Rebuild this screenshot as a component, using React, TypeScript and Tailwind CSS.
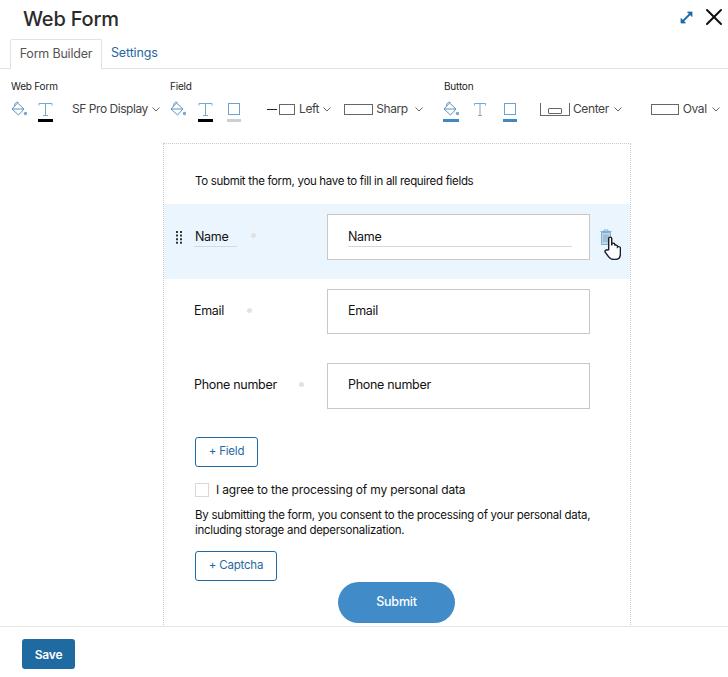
import React from 'react';
import { X } from 'lucide-react';

const Chevron = ({ className = '' }: { className?: string }) => (
    <svg width="8" height="5" viewBox="0 0 8 5" fill="none" className={`shrink-0 ${className}`}>
        <path d="M0.5 0.5L4 4L7.5 0.5" stroke="#555" strokeWidth="0.9" />
    </svg>
);

const Bucket = () => (
    <svg width="16" height="16" viewBox="0 0 16 16" fill="none" stroke="#5b93c2" strokeWidth="1" className="block">
        <path d="M6.5 2L13 8L7.5 14L1 8Z" />
        <path d="M3.5 5.5C3.5 2 5.5 0.5 7.5 1.5" />
        <path d="M1 8H13" />
        <circle cx="14.5" cy="12.5" r="1.2" fill="#8ab4d6" />
    </svg>
);

const TextIcon = () => (
    <svg width="15" height="15" viewBox="0 0 15 15" fill="none" stroke="#7aa9cf" strokeWidth="1" className="block">
        <path d="M1 3.5V1.5H14V3.5M7.5 1.5V13.5M5 13.5H10" />
    </svg>
);

// icon with a colour bar underneath
const Swatch = ({ bar, children, className = '' }: { bar: string; children: React.ReactNode; className?: string }) => (
    <div className={`relative flex h-4 items-center justify-center ${className}`}>
        {children}
        <div className={`absolute top-[18px] left-0 h-[3px] w-full ${bar}`}></div>
    </div>
);

const Row = ({ label, hint, active, markGap, height, inputHeight }: { label: string; hint: string; active?: boolean; markGap: string; height: string; inputHeight: string }) => (
    <div className={`flex items-start pt-[10px] ${height} ${active ? 'bg-[#ebf5fd]' : ''}`}>
        <div className={`relative flex w-[163px] shrink-0 items-center pl-[30px] ${inputHeight}`}>
            {active && (
                <svg width="7" height="13" viewBox="0 0 7 13" fill="#333" className="absolute top-[17px] left-[12px]">
                    <path d="M0 0H2V2H0ZM4 0H6V2H4ZM0 3.6H2V5.6H0ZM4 3.6H6V5.6H4ZM0 7.2H2V9.2H0ZM4 7.2H6V9.2H4ZM0 10.8H2V12.8H0ZM4 10.8H6V12.8H4Z" />
                </svg>
            )}
            <span className={`text-[12.5px] tracking-[-0.3px] text-[#111] ${active ? 'h-[20px] w-[43px] border-b border-[#d5d8dc] pl-px leading-[20px]' : 'pb-px'}`}>{label}</span>
            <span className={`h-[5px] w-[5px] rounded-full bg-[#e2e2e2] ${markGap}`}></span>
        </div>
        <div className={`flex w-[263px] shrink-0 items-center border border-[#c8c8c8] bg-white pl-[20px] ${inputHeight}`}>
            <span className={`text-[12.5px] tracking-[-0.3px] text-[#111] ${active ? 'h-[20px] w-[224px] border-b border-[#d5d8dc] leading-[20px]' : 'pb-px'}`}>{hint}</span>
        </div>
        {active && (
            <div className="relative mt-[15px] ml-[10px]">
                <svg width="12" height="16" viewBox="0 0 12 16" fill="#bcd6ec" stroke="#6d9fc9" strokeWidth="0.8" className="block">
                    <path d="M0.5 2.5H11.5M4 2.5V1H8V2.5" fill="none" />
                    <path d="M1.5 3.5H10.5V15.5H1.5Z" />
                    <path d="M4 5.5V13M6 5.5V13M8 5.5V13" stroke="#7a9cba" />
                </svg>
                {/* hand cursor over the trash icon */}
                <svg width="17" height="24" viewBox="0 0 14.5 23" preserveAspectRatio="none" className="absolute top-[7px] left-[4px]" fill="white" stroke="#1a1a2a" strokeWidth="1.2">
                    <path d="M4 13V2.5C4 0.6 6.6 0.6 6.6 2.5V9L6.8 7.5C7.3 6.5 9 6.7 9.2 8V9.2C9.6 8.3 11.3 8.5 11.5 9.6V10.6C12.2 9.8 14 10.2 14 11.6V17C14 20 12.5 22.5 9.5 22.5H8C6 22.5 5 21.5 4 20L1 15.5C0.2 14 2.2 12.5 3.2 13.6Z" />
                </svg>
            </div>
        )}
    </div>
);

export default function App() {
    return (
        <div className="flex h-[677px] w-[728px] flex-col overflow-hidden bg-white font-['Inter',sans-serif] text-[#111]">
            {/* Header */}
            <div className="flex h-[39px] shrink-0 items-start justify-between pl-[23px]">
                <h1 className="pt-[5px] text-[20px] leading-[28px] font-medium tracking-[-0.2px] text-[#2b2b2b]">Web Form</h1>
                <div className="flex items-center gap-[6px] pt-[3px]">
                    <svg width="15" height="15" viewBox="0 0 15 15" fill="none" stroke="#1f6aa5" strokeWidth="1.8">
                        <path d="M3 12L12 3" />
                        <path d="M8.5 2H13V6.5Z" fill="#1f6aa5" strokeWidth="0.8" />
                        <path d="M2 8.5V13H6.5Z" fill="#1f6aa5" strokeWidth="0.8" />
                    </svg>
                    <X size={28} strokeWidth={1.7} color="#111" />
                </div>
            </div>

            {/* Tabs */}
            <div className="flex h-[30px] shrink-0 items-end border-b border-[#dfe3e8] pl-[10px]">
                <div className="relative top-px flex h-[30px] w-[92px] items-center justify-center rounded-t-[2px] border border-b-0 border-[#dfe3e8] bg-white text-[12.5px] tracking-[-0.2px] text-[#555]">Form Builder</div>
                <div className="flex h-[30px] items-center pt-px pl-[9px] text-[12.5px] tracking-[-0.15px] text-[#26689f]">Settings</div>
            </div>

            {/* Toolbar */}
            <div className="flex h-[74px] shrink-0 pt-[11px] pl-[11px] text-[12px] tracking-[-0.4px] text-[#444]">
                <div className="w-[159px] shrink-0">
                    <div className="h-[20px] text-[10px] leading-[13px] tracking-[-0.2px] text-[#222]">Web Form</div>
                    <div className="flex items-center">
                        <div className="w-[16px]"><Bucket /></div>
                        <Swatch bar="bg-black" className="ml-[11px] w-[15px]"><TextIcon /></Swatch>
                        <span className="ml-[19px] tracking-[-0.45px]">SF Pro Display</span>
                        <Chevron className="ml-[4px]" />
                    </div>
                </div>
                <div className="w-[274px] shrink-0">
                    <div className="h-[20px] text-[10px] leading-[13px] tracking-[-0.2px] text-[#222]">Field</div>
                    <div className="flex items-center">
                        <div className="w-[16px]"><Bucket /></div>
                        <Swatch bar="bg-black" className="ml-[12px] w-[15px]"><TextIcon /></Swatch>
                        <Swatch bar="bg-[#cfcfcf]" className="ml-[14px] w-[14px]"><div className="h-[12px] w-[12px] border border-[#6ea2cc]"></div></Swatch>
                        <div className="ml-[26px] h-px w-[10px] bg-[#222]"></div>
                        <div className="ml-[2px] h-[11px] w-[16px] border border-[#666]"></div>
                        <span className="ml-[4px]">Left</span>
                        <Chevron className="ml-[4px]" />
                        <div className="ml-[13px] h-[11px] w-[29px] border border-[#666]"></div>
                        <span className="ml-[3px]">Sharp</span>
                        <Chevron className="ml-[7px]" />
                    </div>
                </div>
                <div className="shrink-0">
                    <div className="h-[20px] text-[10px] leading-[13px] tracking-[-0.2px] text-[#222]">Button</div>
                    <div className="flex items-center">
                        <Swatch bar="bg-[#3f8ac6]" className="-ml-px w-[16px]"><Bucket /></Swatch>
                        <div className="ml-[15px]"><svg width="12" height="13" viewBox="0 0 12 13" fill="none" stroke="#7aa9cf" strokeWidth="1" className="block"><path d="M0.5 2.5V0.5H11.5V2.5M6 0.5V12.5M4 12.5H8" /></svg></div>
                        <Swatch bar="bg-[#3f8ac6]" className="ml-[17px] w-[14px]"><div className="h-[12px] w-[12px] border border-[#6ea2cc]"></div></Swatch>
                        <div className="ml-[23px] flex h-[13px] w-[30px] items-end justify-center border-x border-b border-[#666] pb-[1px]">
                            <div className="h-[6px] w-[14px] rounded-[1px] border border-[#666]"></div>
                        </div>
                        <span className="ml-[3px]">Center</span>
                        <Chevron className="ml-[5px]" />
                        <div className="ml-[29px] h-[11px] w-[28px] border border-[#666]"></div>
                        <span className="ml-[4px]">Oval</span>
                        <Chevron className="ml-[5px]" />
                    </div>
                </div>
            </div>

            {/* Form canvas */}
            <div className="min-h-0 flex-1 pl-[163px]">
                <div className="h-[484px] w-[468px] border-x border-t border-dotted border-[#c9c9c9]">
                    <div className="flex h-[60px] items-start pt-[30px] pl-[31px] text-[11.5px] leading-[15px] tracking-[-0.32px]">To submit the form, you have to fill in all required fields</div>
                    <Row label="Name" hint="Name" active markGap="ml-[14px] -mt-[3px]" height="h-[75px]" inputHeight="h-[46px]" />
                    <Row label="Email" hint="Email" markGap="ml-[23px] -mt-[3px]" height="h-[74px]" inputHeight="h-[45px]" />
                    <Row label="Phone number" hint="Phone number" markGap="ml-[22px] -mt-[3px]" height="h-[74px]" inputHeight="h-[46px]" />
                    <div className="pl-[31px]">
                        <div className="mt-[10px] flex h-[30px] w-[63px] items-center justify-center rounded-[3px] border border-[#1f6aa5] text-[11.5px] tracking-[-0.2px] text-[#26689f]">+ Field</div>
                        <div className="mt-[14px] flex items-center">
                            <div className="h-[14px] w-[14px] border border-[#d9d9d9]"></div>
                            <span className="ml-[7px] text-[12px] tracking-[-0.17px]">I agree to the processing of my personal data</span>
                        </div>
                        <p className="mt-[9px] w-[410px] text-[11.5px] leading-[15px] tracking-[-0.28px]">By submitting the form, you consent to the processing of your personal data, including storage and depersonalization.</p>
                        <div className="mt-[13px] flex h-[30px] w-[82px] items-center justify-center rounded-[3px] border border-[#1f6aa5] text-[11.5px] tracking-[-0.2px] text-[#26689f]">+ Captcha</div>
                    </div>
                    <div className="mt-px ml-[174px] flex h-[41px] w-[117px] items-center justify-center rounded-full bg-[#408bc8] text-[12.5px] font-medium tracking-[-0.2px] text-white">Submit</div>
                </div>
            </div>

            {/* Footer */}
            <div className="h-[51px] shrink-0 border-t border-[#e5e5e5] pt-[12px] pl-[22px]">
                <div className="flex h-[30px] w-[53px] items-center justify-center rounded-[3px] bg-[#1f6aa0] pt-px text-[12px] font-semibold tracking-[-0.2px] text-white">Save</div>
            </div>
        </div>
    );
}
